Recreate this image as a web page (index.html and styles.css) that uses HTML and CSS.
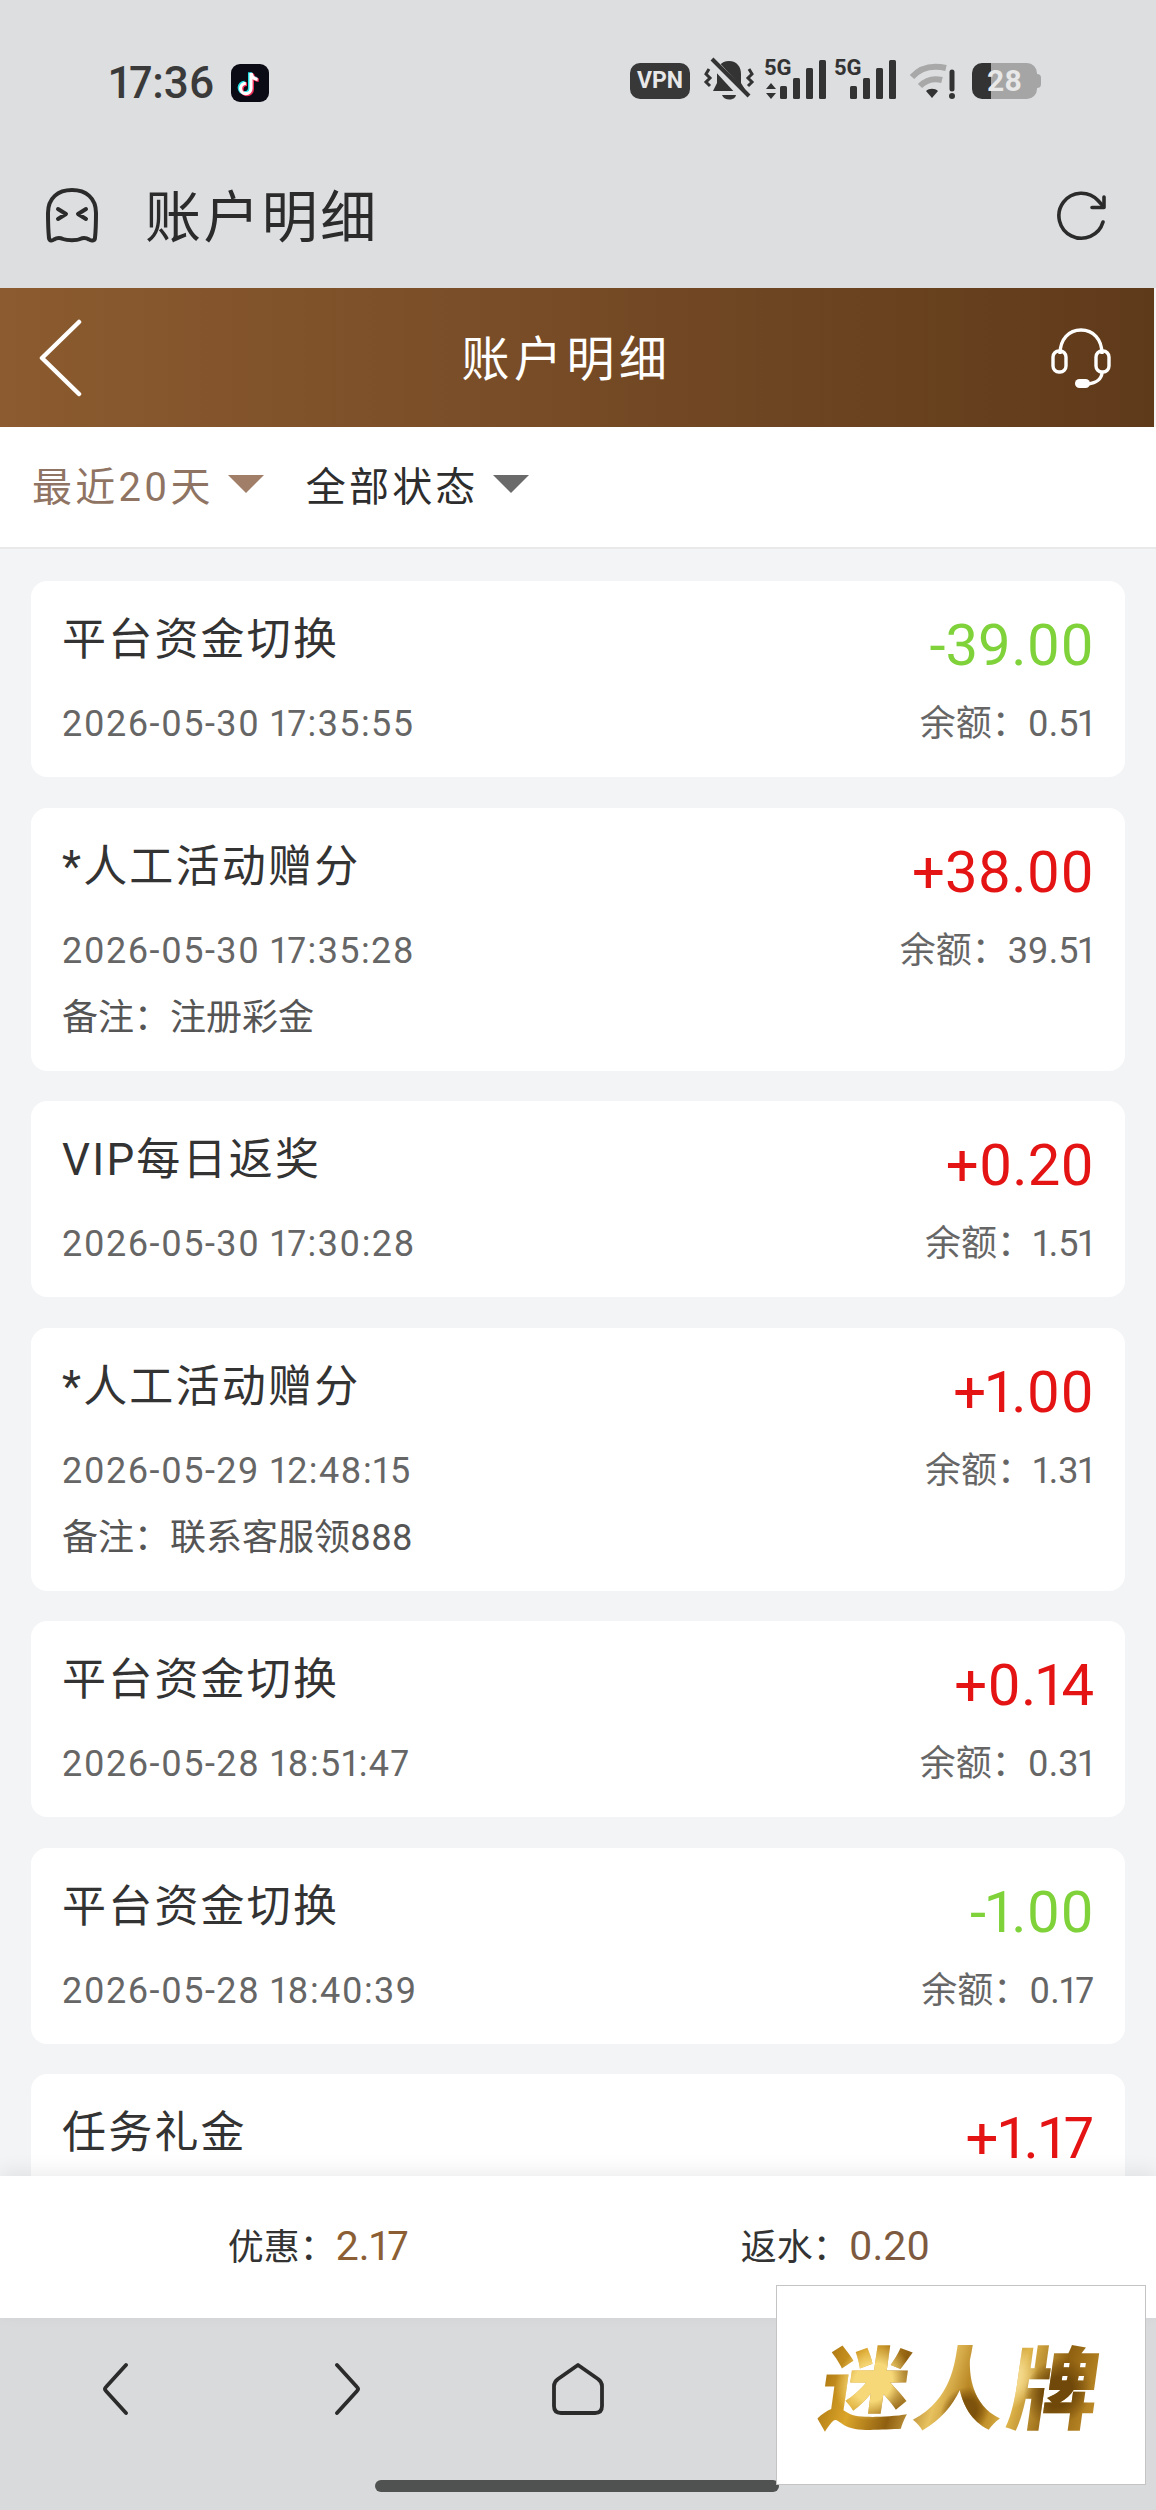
FILE: index.html
```html
<!DOCTYPE html>
<html lang="zh-Hans">
<head>
  <meta charset="UTF-8">
  <title>账户明细</title>
  <link rel="stylesheet" href="styles.css">
</head>
<body>
  <div class="page">
    <!-- 系统状态栏 -->
    <div class="status-bar">
      <div class="status-left">
        <span class="time">17:36</span>
        <svg class="tiktok" width="38" height="38" viewBox="0 0 38 38">
          <rect width="38" height="38" rx="9" fill="#0b0b16"/>
          <path d="M20 9v15.500a5.200 5.200 0 1 1-5.200-5.200M20 9c.6 3.800 3 6 6.600 6.400" fill="none" stroke="#25e0e6" stroke-width="3.600" transform="translate(-1.200 -.8)"/>
          <path d="M20 9v15.500a5.200 5.200 0 1 1-5.200-5.200M20 9c.6 3.800 3 6 6.600 6.400" fill="none" stroke="#f0305a" stroke-width="3.600" transform="translate(1.200 .8)"/>
          <path d="M20 9v15.500a5.200 5.200 0 1 1-5.200-5.200M20 9c.6 3.800 3 6 6.600 6.400" fill="none" stroke="#fff" stroke-width="3.200"/>
        </svg>
      </div>
      <div class="status-right">
        <span class="vpn">VPN</span>
        <svg class="bell" width="50" height="44" viewBox="0 0 50 44">
          <path d="M24 3c8 0 12 6 12 13v9l5 8H8l4-8v-9C12 9 16 3 24 3z" fill="#333"/>
          <path d="M17 37h14c-1 6-12 6-14 0z" fill="#333"/>
          <path d="M4 0l35 38" stroke="#dcdee0" stroke-width="9" fill="none"/>
          <path d="M7 1l37 37" stroke="#333" stroke-width="4" fill="none"/>
          <path d="M4 11L1 16l4 4-4 4 4 4M44 11l3 5-4 4 4 4-4 4" stroke="#333" stroke-width="3" fill="none"/>
        </svg>
        <svg class="signal" width="62" height="42" viewBox="0 0 62 42">
          <text class="signal-label" x="0" y="17">5G</text>
          <path d="M7 25l5 6H2zM7 41l5-6H2z" fill="#333"/>
          <rect x="16" y="28" width="7" height="13" rx="1.500" fill="#333"/>
          <rect x="29" y="20" width="7" height="21" rx="1.500" fill="#333"/>
          <rect x="42" y="10" width="7" height="31" rx="1.500" fill="#333"/>
          <rect x="55" y="2" width="7" height="39" rx="1.500" fill="#333"/>
        </svg>
        <svg class="signal" width="62" height="42" viewBox="0 0 62 42">
          <text class="signal-label" x="0" y="17">5G</text>
          <rect x="16" y="28" width="7" height="13" rx="1.500" fill="#333"/>
          <rect x="29" y="20" width="7" height="21" rx="1.500" fill="#333"/>
          <rect x="42" y="10" width="7" height="31" rx="1.500" fill="#333"/>
          <rect x="55" y="2" width="7" height="39" rx="1.500" fill="#333"/>
        </svg>
        <svg class="wifi" width="46" height="38" viewBox="0 0 46 38">
          <path d="M2 15C11 5 23 3 36 6" fill="none" stroke="#a8a8a8" stroke-width="6"/>
          <path d="M10 24c6-6 14-8 22-6" fill="none" stroke="#a8a8a8" stroke-width="6"/>
          <path d="M16 29c3-3 9-3 12 0l-6 7z" fill="#333"/>
          <path d="M42 10v17" stroke="#333" stroke-width="5" stroke-linecap="round"/>
          <circle cx="42" cy="34" r="3" fill="#333"/>
        </svg>
        <div class="battery"><span class="battery-num">28</span></div>
      </div>
    </div>

    <!-- 浏览器标题栏 -->
    <div class="browser-bar">
      <svg class="ghost" width="52" height="56" viewBox="0 0 52 56">
        <path d="M3 50c-1-10-1-18-1-25C2 10 12 2 26 2s24 8 24 23c0 7 0 15-1 25-.3 3-4 3-6 1.500-3-2-6-2-9-.5-3 1.500-13 1.500-17 0-3-1.500-6-1.500-9 .5-2 1.500-4.700 1.500-5-1.500z" fill="none" stroke="#2b2b2b" stroke-width="4"/>
        <path d="M12 21l8 5-8 5M40 21l-8 5 8 5" fill="none" stroke="#2b2b2b" stroke-width="4" stroke-linecap="round" stroke-linejoin="round"/>
      </svg>
      <span class="browser-title">账户明细</span>
      <svg class="refresh" width="52" height="50" viewBox="0 0 52 50">
        <path d="M47 31A22.500 22.500 0 1 1 42 9.500l5 5.500" fill="none" stroke="#2b2b2b" stroke-width="3.600" stroke-linecap="round"/>
        <path d="M48 6v10.500H36" fill="none" stroke="#2b2b2b" stroke-width="3.600" stroke-linecap="round" stroke-linejoin="round"/>
      </svg>
    </div>

    <!-- 页面头部 -->
    <div class="header">
      <svg class="back" width="44" height="78" viewBox="0 0 44 78">
        <path d="M41 3L4 39l37 36" fill="none" stroke="#fff" stroke-width="4.500" stroke-linecap="round" stroke-linejoin="round"/>
      </svg>
      <span class="header-title">账户明细</span>
      <svg class="service" width="60" height="62" viewBox="0 0 60 62">
        <path d="M9 27C9 12 18 3 30 3s21 9 21 24" fill="none" stroke="#fff" stroke-width="3.400"/>
        <rect x="2" y="24" width="13" height="21" rx="6" fill="none" stroke="#fff" stroke-width="3.400"/>
        <rect x="45" y="24" width="13" height="21" rx="6" fill="none" stroke="#fff" stroke-width="3.400"/>
        <path d="M51 45c0 7-6 11-14 12" fill="none" stroke="#fff" stroke-width="3.400"/>
        <rect x="24" y="52" width="15" height="9" rx="4.500" fill="#fff"/>
      </svg>
    </div>

    <!-- 筛选 -->
    <div class="filter">
      <div class="filter-item active">最近20天<i class="arrow"></i></div>
      <div class="filter-item">全部状态<i class="arrow"></i></div>
    </div>

    <!-- 明细列表 -->
    <div class="list">
      <div class="card">
        <div class="row-top"><span class="name">平台资金切换</span><span class="amount minus">-39.00</span></div>
        <div class="row-sub"><span class="date">2026-05-30 17:35:55</span><span>余额：0.51</span></div>
      </div>
      <div class="card">
        <div class="row-top"><span class="name">*人工活动赠分</span><span class="amount plus">+38.00</span></div>
        <div class="row-sub"><span class="date">2026-05-30 17:35:28</span><span>余额：39.51</span></div>
        <div class="note">备注：注册彩金</div>
      </div>
      <div class="card">
        <div class="row-top"><span class="name">VIP每日返奖</span><span class="amount plus">+0.20</span></div>
        <div class="row-sub"><span class="date">2026-05-30 17:30:28</span><span>余额：1.51</span></div>
      </div>
      <div class="card">
        <div class="row-top"><span class="name">*人工活动赠分</span><span class="amount plus">+1.00</span></div>
        <div class="row-sub"><span class="date">2026-05-29 12:48:15</span><span>余额：1.31</span></div>
        <div class="note">备注：联系客服领888</div>
      </div>
      <div class="card">
        <div class="row-top"><span class="name">平台资金切换</span><span class="amount plus">+0.14</span></div>
        <div class="row-sub"><span class="date">2026-05-28 18:51:47</span><span>余额：0.31</span></div>
      </div>
      <div class="card">
        <div class="row-top"><span class="name">平台资金切换</span><span class="amount minus">-1.00</span></div>
        <div class="row-sub"><span class="date">2026-05-28 18:40:39</span><span>余额：0.17</span></div>
      </div>
      <div class="card">
        <div class="row-top"><span class="name">任务礼金</span><span class="amount plus">+1.17</span></div>
      </div>
    </div>

    <!-- 底部汇总 -->
    <div class="summary">
      <span>优惠：<b class="gift">2.17</b></span>
      <span>返水：<b class="rebate">0.20</b></span>
    </div>

    <!-- 浏览器导航 -->
    <div class="nav">
      <svg width="26" height="54" viewBox="0 0 26 54">
        <path d="M23 3L3 25q-2 2 0 4l20 22" fill="none" stroke="#2b2b2b" stroke-width="3.800" stroke-linecap="round"/>
      </svg>
      <svg width="26" height="54" viewBox="0 0 26 54">
        <path d="M3 3l20 22q2 2 0 4L3 51" fill="none" stroke="#2b2b2b" stroke-width="3.800" stroke-linecap="round"/>
      </svg>
      <svg width="54" height="54" viewBox="0 0 54 54">
        <path d="M27 3L7 17q-4 3-4 7v20q0 7 7 7h34q7 0 7-7V24q0-4-4-7z" fill="none" stroke="#2b2b2b" stroke-width="3.800" stroke-linejoin="round"/>
      </svg>
      <span></span>
      <span></span>
    </div>

    <div class="home-line"></div>
    <div class="float-logo"><span class="logo-text">迷人牌</span></div>
  </div>
</body>
</html>
```

FILE: styles.css
```css
* {
  box-sizing: border-box;
}

body {
  margin: 0;
  font-family: Roboto, "Noto Sans CJK SC", sans-serif;
  font-variant-numeric: proportional-nums;
  color: #333;
}

.page {
  position: relative;
  display: flex;
  flex-direction: column;
  height: 2510px;
  overflow: hidden;
  background: #f3f4f6;
}

/* 状态栏 */
.status-bar {
  height: 152px;
  padding: 58px 119px 0 109px;
  display: flex;
  justify-content: space-between;
  align-items: flex-start;
  background: #dcdee0;
}

.status-left {
  display: flex;
  align-items: center;
  gap: 17px;
  padding-top: 4px;
}

.time {
  font-size: 44px;
  line-height: 42px;
  font-weight: 500;
  color: #3a3a3a;
}

.status-right {
  display: flex;
  align-items: flex-start;
  gap: 8px;
}

.status-right svg {
  overflow: visible;
}

.vpn {
  width: 60px;
  height: 36px;
  margin: 5px 7px 0 0;
  border-radius: 10px;
  background: #383838;
  color: #e8e8e8;
  font-size: 23px;
  line-height: 36px;
  font-weight: 700;
  text-align: center;
}

.bell {
  margin-right: 1px;
}

.signal-label {
  font-family: Roboto, sans-serif;
  font-size: 22px;
  font-weight: 700;
  fill: #333;
}

.wifi {
  margin: 4px 8px 0 6px;
}

.battery {
  position: relative;
  width: 65px;
  height: 36px;
  margin-top: 5px;
  border-radius: 10px;
  background: linear-gradient(90deg, #333 0 19px, #a5a5a5 19px);
  text-align: center;
}

.battery::after {
  content: "";
  position: absolute;
  right: -4px;
  top: 11px;
  width: 4px;
  height: 14px;
  border-radius: 0 4px 4px 0;
  background: #a5a5a5;
}

.battery-num {
  font-size: 30px;
  line-height: 36px;
  font-weight: 700;
  color: #e8e8e8;
}

/* 标题栏 */
.browser-bar {
  height: 136px;
  padding: 0 48px 8px 46px;
  display: flex;
  align-items: center;
  background: #dcdee0;
}

.browser-title {
  margin: -8px 0 0 47px;
  font-size: 56px;
  letter-spacing: 2.400px;
  color: #2b2b2b;
}

.refresh {
  margin-left: auto;
}

.header {
  height: 139px;
  margin-right: 2px;
  padding: 0 43px 0 38px;
  display: flex;
  align-items: center;
  justify-content: space-between;
  background: linear-gradient(90deg, #8c5b2f 0%, #7a4e28 40%, #5f3a1a 100%);
}

.header-title {
  margin-top: -6px;
  font-size: 48px;
  letter-spacing: 4.500px;
  color: #fff;
}

.filter {
  height: 122px;
  padding: 0 32px 6px;
  display: flex;
  align-items: center;
  gap: 42px;
  background: #fff;
  border-bottom: 2px solid #e9e9ea;
}

.filter-item {
  display: flex;
  align-items: center;
  font-size: 40px;
  letter-spacing: 3.200px;
  color: #2d2d2d;
}

.filter-item.active {
  color: #8f7463;
}

.arrow {
  width: 0;
  height: 0;
  margin-left: 14px;
  border-left: 18px solid transparent;
  border-right: 18px solid transparent;
  border-top: 18px solid #6a6a6a;
}

.active .arrow {
  border-top-color: #a07e68;
}

/* 列表 */
.list {
  flex: 1;
  min-height: 0;
  overflow: hidden;
  padding: 32px 31px 0;
}

.card {
  margin-bottom: 30.500px;
  padding: 21px 31px 27px;
  border-radius: 16px;
  background: #fff;
}

.row-top,
.row-sub {
  display: flex;
  justify-content: space-between;
}

.row-top {
  height: 78px;
}

.name {
  padding-top: 2px;
  font-size: 44px;
  line-height: 72px;
  letter-spacing: 2.200px;
  color: #333;
}

.amount {
  margin-top: 7px;
  font-size: 58px;
  line-height: 72px;
}

.plus {
  color: #e51414;
}

.minus {
  color: #7fd23a;
}

.row-sub {
  margin-top: 18px;
  font-size: 36px;
  line-height: 52px;
  color: #666;
}

.date {
  letter-spacing: 1.400px;
}

.note {
  margin-top: 15px;
  font-size: 36px;
  line-height: 52px;
  color: #555;
}

/* 底部 */
.summary {
  position: relative;
  height: 142px;
  padding: 0 0 6px 2px;
  display: flex;
  align-items: center;
  justify-content: center;
  gap: 332px;
  background: #fff;
  box-shadow: 0 -6px 18px rgba(0, 0, 0, .07);
  font-size: 36px;
  color: #333;
}

.summary b {
  font-size: 41px;
  font-weight: 400;
}

.gift {
  color: #8b5e34;
}

.rebate {
  color: #7d5a3f;
}

.nav {
  height: 192px;
  padding-top: 44px;
  display: grid;
  grid-template-columns: repeat(5, 1fr);
  justify-items: center;
  align-items: start;
  background: #d9dadc;
}

.home-line {
  position: absolute;
  left: 375px;
  top: 2480px;
  width: 404px;
  height: 12px;
  border-radius: 6px;
  background: #505151;
}

.float-logo {
  position: absolute;
  left: 776px;
  top: 2285px;
  width: 370px;
  height: 200px;
  display: flex;
  align-items: center;
  justify-content: center;
  padding: 14px 0 0 2px;
  border: 1px solid #c4c4c4;
  background: #fff;
}

.logo-text {
  display: block;
  transform: skewX(-8deg);
  font-size: 90px;
  line-height: 96px;
  font-weight: 900;
  letter-spacing: 4px;
  white-space: nowrap;
  color: transparent;
  background:
    radial-gradient(circle at 18% 40%, #f6d878 0 8%, transparent 16%),
    radial-gradient(circle at 52% 70%, #7d520c 0 7%, transparent 15%),
    radial-gradient(circle at 84% 50%, #6f480a 0 6%, transparent 14%),
    radial-gradient(circle at 64% 35%, #f3d88a 0 9%, transparent 18%),
    linear-gradient(100deg, #a8720f 0%, #dba52a 14%, #8f5f10 28%, #e8c260 42%, #a8720f 55%, #e0b64c 68%, #8f6010 82%, #c9962e 100%);
  -webkit-background-clip: text;
  background-clip: text;
}
```
